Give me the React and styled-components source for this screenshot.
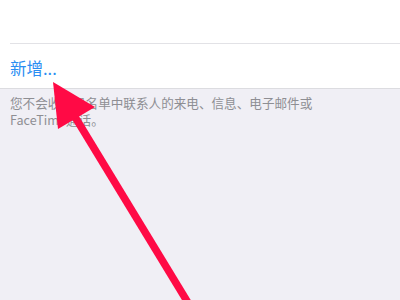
import React from "react";
import styled, { createGlobalStyle } from "styled-components";

const Global = createGlobalStyle`
  html, body { margin: 0; padding: 0; }
  body {
    width: 400px;
    height: 300px;
    overflow: hidden;
    background: #f0eff5;
    font-family: "Noto Sans CJK SC", "Noto Sans", sans-serif;
  }
`;

const Page = styled.div`
  position: relative;
  width: 400px;
  height: 300px;
  background: #f0eff5;
  display: flex;
  flex-direction: column;
`;

const Group = styled.div`
  background: #ffffff;
  display: flex;
  flex-direction: column;
  border-bottom: 1px solid #dcdce0;
`;

const Cell = styled.div`
  height: ${(p) => p.$h}px;
  display: flex;
  align-items: center;
  padding-left: 10px;
  box-sizing: border-box;
`;

const Separator = styled.div`
  height: 1px;
  margin-left: 10px;
  background: #e2e2e6;
`;

const AddLabel = styled.span`
  color: #2a8df2;
  font-size: 16.5px;
  line-height: 1;
  margin-top: 4px;
`;

const Footer = styled.p`
  margin: 0;
  padding: 6px 10px 0 10px;
  color: #8e8e93;
  font-size: 12.6px;
  line-height: 16.5px;
`;

const Overlay = styled.svg`
  position: absolute;
  left: 0;
  top: 0;
  pointer-events: none;
`;

export default function App() {
  return (
    <>
      <Global />
      <Page>
        <Group>
          <Cell $h={43} />
          <Separator />
          <Cell $h={44}>
            <AddLabel>新增...</AddLabel>
          </Cell>
        </Group>
        <Footer>
          您不会收到黑名单中联系人的来电、信息、电子邮件或
          <br />
          FaceTime通话。
        </Footer>
        <Overlay width="400" height="300" viewBox="0 0 400 300">
          <line x1="190" y1="306" x2="72" y2="112" stroke="#ff0a45" strokeWidth="7.5" />
          <polygon points="53,82 95,107 58,129" fill="#ff0a45" />
        </Overlay>
      </Page>
    </>
  );
}
